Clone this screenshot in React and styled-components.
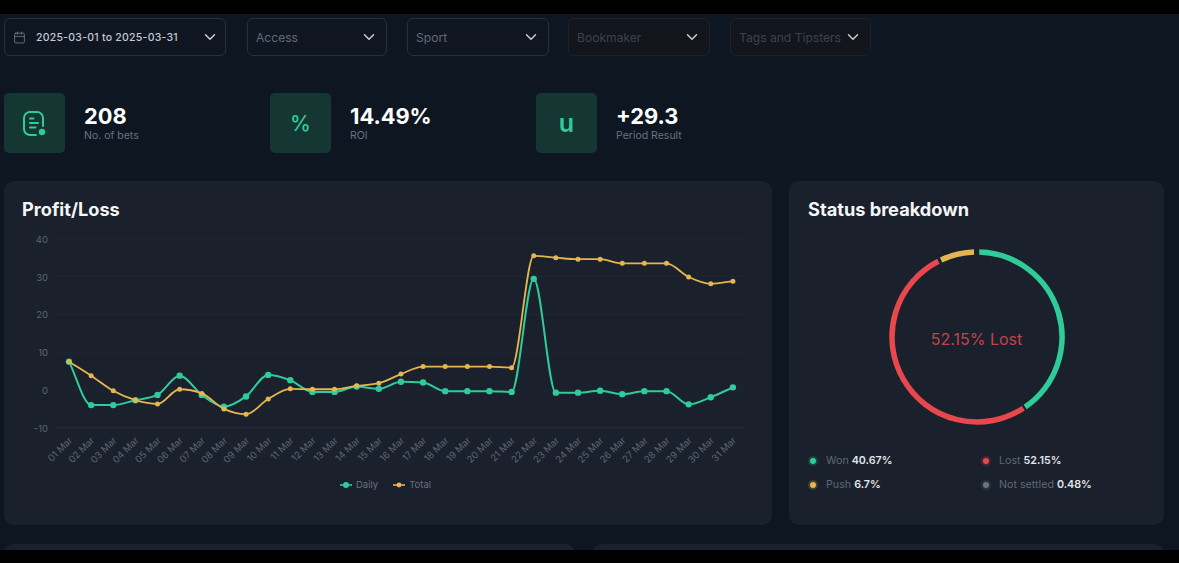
import React from "react";
import styled, { createGlobalStyle } from "styled-components";
import { Calendar, ChevronDown } from "lucide-react";

const GREEN = "#2fcb98";
const YELLOW = "#e5b64f";
const RED = "#e8484d";
const GREY = "#6b7280";

const daily = [7.5, -4, -4, -2.7, -1.3, 3.8, -1.3, -4.4, -1.7, 4, 2.6, -0.5, -0.5, 0.9, 0.3, 2.2, 2, -0.3, -0.3, -0.3, -0.5, 29.4, -0.7, -0.7, -0.2, -1.1, -0.3, -0.3, -3.8, -1.9, 0.7];
const total = [7.5, 3.8, -0.2, -2.7, -3.7, 0.2, -0.9, -5, -6.4, -2.4, 0.3, 0.2, 0.2, 1.1, 1.8, 4.2, 6.2, 6.2, 6.2, 6.2, 5.9, 35.5, 35, 34.6, 34.6, 33.5, 33.5, 33.5, 29.9, 28.1, 28.8];

const filters = [
  { label: "Access", width: 140, gap: 21 },
  { label: "Sport", width: 142, gap: 20 },
  { label: "Bookmaker", width: 142, gap: 19, off: true },
  { label: "Tags and Tipsters", width: 141, gap: 20, off: true },
];

const legendItems = [
  { color: GREEN, name: "Won", value: "40.67%" },
  { color: RED, name: "Lost", value: "52.15%" },
  { color: YELLOW, name: "Push", value: "6.7%" },
  { color: GREY, name: "Not settled", value: "0.48%" },
];

const X0 = 47;
const STEP = 22.13;
const px = (i) => X0 + i * STEP;
const py = (v) => 165 - v * 3.78;

// monotone cubic, same maths as d3 curveMonotoneX
const linePath = (values) => {
  const pts = values.map((v, i) => [px(i), py(v)]);
  const n = pts.length;
  const d = [];
  for (let i = 0; i < n - 1; i++) d.push((pts[i + 1][1] - pts[i][1]) / STEP);
  const m = [d[0]];
  for (let i = 1; i < n - 1; i++) {
    const a = d[i - 1];
    const b = d[i];
    const p = (a + b) / 2;
    m.push((Math.sign(a) + Math.sign(b)) * Math.min(Math.abs(a), Math.abs(b), 0.5 * Math.abs(p)) || 0);
  }
  m.push(d[n - 2]);
  let out = `M${pts[0][0]},${pts[0][1]}`;
  for (let i = 0; i < n - 1; i++) {
    const h = STEP / 3;
    out += `C${pts[i][0] + h},${pts[i][1] + m[i] * h} ${pts[i + 1][0] - h},${pts[i + 1][1] - m[i + 1] * h} ${pts[i + 1][0]},${pts[i + 1][1]}`;
  }
  return out;
};

const arc = (from, to, r = 85) => {
  const pt = (deg) => {
    const a = ((deg - 90) * Math.PI) / 180;
    return `${90 + r * Math.cos(a)},${90 + r * Math.sin(a)}`;
  };
  return `M${pt(from)}A${r},${r} 0 ${to - from > 180 ? 1 : 0} 1 ${pt(to)}`;
};

const DocIcon = () => (
  <svg width="23" height="25" viewBox="0 0 23 25" fill="none" stroke={GREEN} strokeWidth="2" strokeLinecap="round">
    <path d="M13 24H7a6 6 0 0 1-6-6V7a6 6 0 0 1 6-6h7a6 6 0 0 1 6 6v8" />
    <path d="M7 7.5h3.5M7 12h8M7 16.5h5.5" />
    <circle cx="19" cy="21" r="3.2" fill={GREEN} stroke="none" />
  </svg>
);

const LineChart = () => (
  <ChartSvg width="732" height="245" viewBox="0 0 732 245">
    {[40, 30, 20, 10, 0, -10].map((v) => (
      <g key={v}>
        <line x1="34" x2="723" y1={py(v)} y2={py(v)} stroke={v === -10 ? "#2a313c" : "#1f2732"} />
        <AxisText x="26" y={py(v) + 4} textAnchor="end">{v}</AxisText>
      </g>
    ))}
    {daily.map((_, i) => (
      <AxisText key={i} textAnchor="end" transform={`translate(${px(i) + 4} 216) rotate(-45)`}>
        {String(i + 1).padStart(2, "0")} Mar
      </AxisText>
    ))}
    <path d={linePath(daily)} fill="none" stroke={GREEN} strokeWidth="2" />
    {daily.map((v, i) => <circle key={i} cx={px(i)} cy={py(v)} r="3.2" fill={GREEN} />)}
    <path d={linePath(total)} fill="none" stroke={YELLOW} strokeWidth="1.8" />
    {total.map((v, i) => <circle key={i} cx={px(i)} cy={py(v)} r="2.5" fill={YELLOW} />)}
  </ChartSvg>
);

const Marker = ({ color, r }) => (
  <svg width="12" height="8" viewBox="0 0 12 8">
    <line x1="0" x2="12" y1="4" y2="4" stroke={color} strokeWidth="1.6" />
    <circle cx="6" cy="4" r={r} fill={color} />
  </svg>
);

const Donut = () => (
  <DonutSvg width="180" height="180" viewBox="0 0 180 180">
    <g fill="none" strokeWidth="5.5">
      <path d={arc(1.5, 145.5)} stroke={GREEN} />
      <path d={arc(147, 333)} stroke={RED} />
      <path d={arc(335, 358)} stroke={YELLOW} />
    </g>
    <DonutText x="89.5" y="98" textAnchor="middle">52.15% Lost</DonutText>
  </DonutSvg>
);

export default function App() {
  return (
    <>
      <GlobalStyle />
      <Frame>
        <Letterbox $height={14} />
        <Page>
          <FilterRow>
            <FilterBox $width={222} $right={6}>
              <DateValue>
                <Calendar size={13} color="#6f7684" strokeWidth={1.6} />
                2025-03-01 to 2025-03-31
              </DateValue>
              <ChevronDown size={18} color="#c9ced6" strokeWidth={2} />
            </FilterBox>
            {filters.map((f) => (
              <FilterBox key={f.label} $width={f.width} $gap={f.gap} $off={f.off}>
                <FilterLabel $off={f.off}>{f.label}</FilterLabel>
                <ChevronDown size={18} color="#c9ced6" strokeWidth={2} />
              </FilterBox>
            ))}
          </FilterRow>

          <StatRow>
            <Stat>
              <StatTile><DocIcon /></StatTile>
              <div>
                <StatValue>208</StatValue>
                <StatLabel>No. of bets</StatLabel>
              </div>
            </Stat>
            <Stat>
              <StatTile $size={21}>%</StatTile>
              <div>
                <StatValue>14.49%</StatValue>
                <StatLabel>ROI</StatLabel>
              </div>
            </Stat>
            <Stat>
              <StatTile $size={25} $bold>u</StatTile>
              <div>
                <StatValue>+29.3</StatValue>
                <StatLabel>Period Result</StatLabel>
              </div>
            </Stat>
          </StatRow>

          <CardGrid>
            <Card $pad={18}>
              <CardTitle>Profit/Loss</CardTitle>
              <LineChart />
              <ChartLegend>
                <LegendKey><Marker color={GREEN} r={3} />Daily</LegendKey>
                <LegendKey><Marker color={YELLOW} r={2.4} />Total</LegendKey>
              </ChartLegend>
            </Card>
            <Card $pad={19}>
              <CardTitle>Status breakdown</CardTitle>
              <Donut />
              <StatusLegend>
                {legendItems.map((item) => (
                  <StatusItem key={item.name}>
                    <Dot $color={item.color} />
                    <span>{item.name} <b>{item.value}</b></span>
                  </StatusItem>
                ))}
              </StatusLegend>
            </Card>
          </CardGrid>

          <LowerGrid>
            <Card />
            <Card />
          </LowerGrid>
        </Page>
        <Letterbox $height={13} />
      </Frame>
    </>
  );
}

const GlobalStyle = createGlobalStyle`
  html, body {
    margin: 0;
    background: #000;
    font-family: Inter, "Liberation Sans", sans-serif;
  }
`;
const Frame = styled.div`
  height: 563px;
  display: flex;
  flex-direction: column;
  overflow: hidden;
`;
const Letterbox = styled.div`
  height: ${(p) => p.$height}px;
  flex: none;
  background: #000;
`;
const Page = styled.main`
  flex: 1;
  min-height: 0;
  overflow: hidden;
  background: #0e1622;
  padding: 4px 15px 0 4px;
`;
const FilterRow = styled.div`
  display: flex;
`;
const FilterBox = styled.div`
  width: ${(p) => p.$width}px;
  height: 38px;
  flex: none;
  box-sizing: border-box;
  margin-left: ${(p) => p.$gap || 0}px;
  padding: 0 ${(p) => p.$right || 8}px 0 8px;
  display: flex;
  align-items: center;
  justify-content: space-between;
  border-radius: 6px;
  border: 1px solid ${(p) => (p.$off ? "#1d2128" : "#2a303b")};
  background: ${(p) => (p.$off ? "#12151c" : "#0f1622")};
`;
const DateValue = styled.div`
  display: flex;
  align-items: center;
  gap: 10px;
  font-size: 10.5px;
  font-weight: 500;
  letter-spacing: 0.25px;
  color: #c6cad2;
`;
const FilterLabel = styled.span`
  font-size: 12.1px;
  color: ${(p) => (p.$off ? "#3c424d" : "#626977")};
`;
const StatRow = styled.div`
  display: flex;
  margin-top: 37px;
`;
const Stat = styled.div`
  width: 266px;
  display: flex;
  align-items: center;
  gap: 19px;
`;
const StatTile = styled.div`
  width: 61px;
  height: 60px;
  border-radius: 5px;
  background: #143733;
  color: ${GREEN};
  font-size: ${(p) => p.$size || 20}px;
  font-weight: ${(p) => (p.$bold ? 600 : 500)};
  display: flex;
  align-items: center;
  justify-content: center;
`;
const StatValue = styled.div`
  font-size: 21.8px;
  line-height: 26px;
  font-weight: 700;
  color: #fff;
`;
const StatLabel = styled.div`
  font-size: 10.5px;
  line-height: 14px;
  color: #6a7180;
`;
const CardGrid = styled.div`
  display: grid;
  grid-template-columns: 768px 375px;
  gap: 17px;
  margin-top: 28px;
`;
const LowerGrid = styled.div`
  display: grid;
  grid-template-columns: 571px 572px;
  gap: 17px;
  margin-top: 19px;
  height: 60px;
`;
const Card = styled.section`
  height: ${(p) => (p.$pad ? "344px" : "60px")};
  box-sizing: border-box;
  padding: 17px ${(p) => p.$pad || 0}px 0;
  border-radius: 10px;
  background: #1a212c;
`;
const CardTitle = styled.h2`
  margin: 0;
  font-size: 18.2px;
  line-height: 22px;
  font-weight: 700;
  color: #f4f5f7;
`;
const ChartSvg = styled.svg`
  display: block;
  margin-top: 5px;
`;
const AxisText = styled.text`
  font-size: 9.5px;
  fill: #5d6473;
`;
const ChartLegend = styled.div`
  display: flex;
  justify-content: center;
  gap: 15px;
  margin: 8px 0 0 -5px;
`;
const LegendKey = styled.div`
  display: flex;
  align-items: center;
  gap: 4px;
  font-size: 9.5px;
  line-height: 14px;
  color: #697080;
`;
const DonutSvg = styled.svg`
  display: block;
  margin: 27px auto 0;
`;
const DonutText = styled.text`
  font-size: 16px;
  fill: #c2434a;
`;
const StatusLegend = styled.div`
  display: grid;
  grid-template-columns: 173px 1fr;
  row-gap: 8px;
  margin-top: 26px;
`;
const StatusItem = styled.div`
  display: flex;
  align-items: center;
  gap: 10px;
  font-size: 10.7px;
  line-height: 16px;
  color: #5f6675;

  b {
    font-weight: 600;
    color: #e3e6ea;
  }
`;
const Dot = styled.span`
  width: 6px;
  height: 6px;
  margin-left: 2px;
  border-radius: 50%;
  background: ${(p) => p.$color};
  box-shadow: 0 0 0 2px ${(p) => p.$color}33;
`;
